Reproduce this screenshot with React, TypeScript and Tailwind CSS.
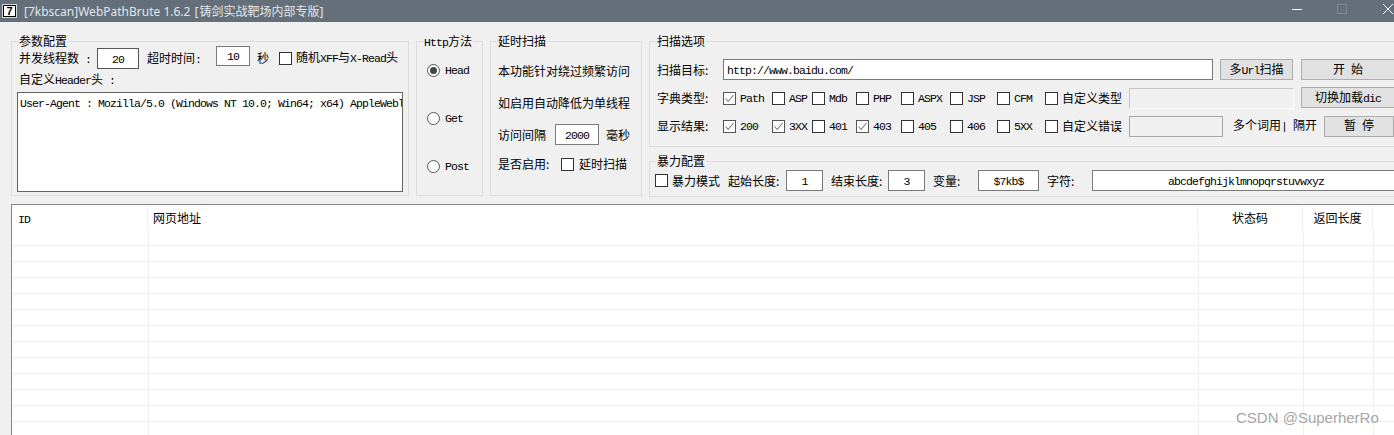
import React from "react";

const CJK = '"Noto Sans CJK SC", sans-serif';

function T({ children }: { children: string }) {
  const parts = children.split(/([\x20-\x7e]+)/).filter((p) => p.length > 0);
  return (
    <span className="whitespace-pre">
      {parts.map((p, i) =>
        /^[\x20-\x7e]+$/.test(p) ? (
          <span key={i} className="font-['Liberation_Mono',monospace] text-[11.5px] tracking-[-0.9px] whitespace-pre">
            {p}
          </span>
        ) : (
          <span key={i}>{p}</span>
        )
      )}
    </span>
  );
}

function Group({ title, className, children }: { title: string; className: string; children?: React.ReactNode }) {
  return (
    <div className={"relative border border-[#dcdcdc] shrink-0 " + className}>
      <div className="absolute left-[7px] -top-[9px] bg-[#f0f0f0] pr-[1px] leading-[16px] whitespace-nowrap">
        <T>{title}</T>
      </div>
      {children}
    </div>
  );
}

function Box({ value, className, left }: { value?: string; className: string; left?: boolean }) {
  return (
    <div
      className={
        "shrink-0 border border-[#7a7a7a] bg-white flex items-center whitespace-nowrap overflow-hidden " +
        (left ? "justify-start pl-[3px] " : "justify-center ") +
        className
      }
    >
      {value ? <T>{value}</T> : null}
    </div>
  );
}

function Check({ checked }: { checked?: boolean }) {
  return (
    <div className={"w-[13px] h-[13px] shrink-0 border bg-white " + (checked ? "border-[#555555]" : "border-[#333333]")}>
      {checked && (
        <svg viewBox="0 0 11 11" className="w-[11px] h-[11px]">
          <path d="M1.5 5.5 L4.2 8.5 L9.5 2" fill="none" stroke="#7a7a7a" strokeWidth="1.1" />
        </svg>
      )}
    </div>
  );
}

function CheckCell({ label, w, checked }: { label: string; w: string; checked?: boolean }) {
  return (
    <div className={"flex items-center gap-[4px] shrink-0 whitespace-nowrap " + w}>
      <Check checked={checked} />
      <T>{label}</T>
    </div>
  );
}

function Radio({ label, on }: { label: string; on?: boolean }) {
  return (
    <div className="flex items-center gap-[5px] h-[16px]">
      <div className="w-[13px] h-[13px] rounded-full border border-[#555555] bg-white flex items-center justify-center">
        {on && <div className="w-[7px] h-[7px] rounded-full bg-[#444444]" />}
      </div>
      <T>{label}</T>
    </div>
  );
}

function Btn({ label, className }: { label: string; className: string }) {
  return (
    <div className={"shrink-0 bg-[#e1e1e1] border border-[#adadad] flex items-center justify-center whitespace-pre " + className}>
      <T>{label}</T>
    </div>
  );
}

const rowsCount = Array.from({ length: 13 }, (_, i) => i);

export default function App() {
  return (
    <div
      className="relative w-[1394px] h-[435px] overflow-hidden bg-[#f0f0f0] text-[12px] text-black"
      style={{ fontFamily: CJK }}
    >
      {/* title bar */}
      <div className="h-[22px] bg-[#646f7a] flex items-center">
        <div className="ml-[2px] w-[15px] h-[14px] bg-white border border-[#d8d8d8] flex items-center justify-center">
          <div className="w-[13px] h-[12px] border border-black bg-white flex items-center justify-center">
            <span className="font-['Liberation_Sans',sans-serif] font-bold text-[11px] leading-none">7</span>
          </div>
        </div>
        <div className="ml-[7px] text-[#e0e6ec] whitespace-nowrap leading-[16px]">
          <span className="font-['Noto_Sans',sans-serif]">[7kbscan]WebPathBrute 1.6.2 </span>
          <span className="ml-[1px]">
            <span className="font-['Noto_Sans',sans-serif] mr-[1px]">[</span>铸剑实战靶场内部专版
            <span className="font-['Noto_Sans',sans-serif]">]</span>
          </span>
        </div>
        <div className="ml-auto mr-[1px] -mt-[4px] flex items-center">
          <div className="w-[10px] h-[1px] bg-white mr-[35px]" />
          <div className="w-[10px] h-[10px] border border-[#7f8a95] mr-[36px]" />
          <svg viewBox="0 0 10 10" className="w-[10px] h-[10px]">
            <path d="M0 0 L10 10 M10 0 L0 10" stroke="#ffffff" strokeWidth="1" />
          </svg>
        </div>
      </div>

      {/* body */}
      <div className="pt-[19px] pl-[11px]">
        <div className="flex gap-[7px] h-[155px] items-start">
          {/* 参数配置 */}
          <Group title="参数配置" className="w-[398px] h-[155px] pl-[7px] pt-[5px]">
            <div className="flex items-start h-[22px]">
              <div className="w-[78px] shrink-0 leading-[22px] whitespace-pre">
                <T>并发线程数 :</T>
              </div>
              <Box value="20" className="w-[42px] h-[21px] mt-[1px] border-[#555555]" />
              <div className="ml-[8px] w-[69px] shrink-0 leading-[22px] whitespace-pre">
                <T>超时时间:</T>
              </div>
              <Box value="10" className="w-[34px] h-[20px] -mt-[1px]" />
              <div className="ml-[7px] w-[22px] shrink-0 leading-[22px]">秒</div>
              <div className="flex items-center gap-[4px] h-[22px] whitespace-nowrap shrink-0">
                <Check />
                <T>随机XFF与X-Read头</T>
              </div>
            </div>
            <div className="-mt-[1px] h-[22px] leading-[22px] whitespace-pre">
              <T>自定义Header头 :</T>
            </div>
            <div className="pt-[2px]">
              <div className="-ml-[2px] w-[386px] h-[100px] bg-white border border-[#646464] pl-[2px] pt-[1px] overflow-hidden whitespace-nowrap leading-[16px]">
                <T>{"User-Agent : Mozilla/5.0 (Windows NT 10.0; Win64; x64) AppleWebl"}</T>
              </div>
            </div>
          </Group>

          {/* Http方法 */}
          <Group title="Http方法" className="w-[67px] h-[155px] pl-[10px] pt-[20px]">
            <div className="flex flex-col gap-[32px]">
              <Radio label="Head" on />
              <Radio label="Get" />
              <Radio label="Post" />
            </div>
          </Group>

          {/* 延时扫描 */}
          <Group title="延时扫描" className="w-[152px] h-[155px] pl-[7px] pt-[21px]">
            <div className="h-[16px] leading-[16px] whitespace-nowrap">本功能针对绕过频繁访问</div>
            <div className="h-[16px] leading-[16px] mt-[16px] whitespace-nowrap">如启用自动降低为单线程</div>
            <div className="flex items-center mt-[13px] h-[21px] whitespace-nowrap">
              <span className="w-[57px]">访问间隔</span>
              <Box value="2000" className="w-[44px] h-[21px]" />
              <span className="ml-[7px]">毫秒</span>
            </div>
            <div className="flex items-center mt-[11px] h-[16px] whitespace-nowrap">
              <span className="w-[63px]">是否启用:</span>
              <div className="flex items-center gap-[5px]">
                <Check />
                <span>延时扫描</span>
              </div>
            </div>
          </Group>

          {/* 右侧 */}
          <div className="flex flex-col gap-[14px] shrink-0">
            <Group title="扫描选项" className="w-[760px] h-[106px] pl-[7px] pt-[17px]">
              <div className="flex items-center h-[21px]">
                <div className="w-[66px] shrink-0 whitespace-nowrap">扫描目标:</div>
                <Box value="http://www.baidu.com/" left className="w-[490px] h-[21px]" />
                <Btn label="多Url扫描" className="ml-[7px] w-[73px] h-[21px]" />
                <Btn label="开 始" className="ml-[8px] w-[94px] h-[21px]" />
              </div>
              <div className="flex items-center h-[22px] mt-[7px]">
                <div className="w-[66px] shrink-0 whitespace-nowrap">字典类型:</div>
                <CheckCell label="Path" w="w-[49px]" checked />
                <CheckCell label="ASP" w="w-[40px]" />
                <CheckCell label="Mdb" w="w-[44px]" />
                <CheckCell label="PHP" w="w-[45px]" />
                <CheckCell label="ASPX" w="w-[49px]" />
                <CheckCell label="JSP" w="w-[47px]" />
                <CheckCell label="CFM" w="w-[48px]" />
                <CheckCell label="自定义类型" w="w-[84px]" />
                <div className="shrink-0 w-[165px] h-[21px] border border-[#c4c4c4] border-r-white border-b-white" />
                <Btn label="切换加载dic" className="ml-[7px] w-[94px] h-[21px] -mt-[1px]" />
              </div>
              <div className="flex items-center h-[22px] mt-[6px]">
                <div className="w-[66px] shrink-0 whitespace-nowrap">显示结果:</div>
                <CheckCell label="200" w="w-[49px]" checked />
                <CheckCell label="3XX" w="w-[40px]" checked />
                <CheckCell label="401" w="w-[44px]" />
                <CheckCell label="403" w="w-[45px]" checked />
                <CheckCell label="405" w="w-[49px]" />
                <CheckCell label="406" w="w-[47px]" />
                <CheckCell label="5XX" w="w-[48px]" />
                <CheckCell label="自定义错误" w="w-[84px]" />
                <div className="shrink-0 w-[94px] h-[21px] border border-[#a8a8a8]" />
                <div className="ml-[10px] w-[91px] shrink-0 whitespace-pre">
                  <T>多个词用| 隔开</T>
                </div>
                <Btn label="暂 停" className="w-[70px] h-[21px]" />
              </div>
            </Group>
            <Group title="暴力配置" className="w-[760px] h-[36px] pl-[5px] pt-[8px]">
              <div className="flex items-center h-[21px] whitespace-nowrap">
                <Check />
                <span className="ml-[4px] w-[56px] shrink-0">暴力模式</span>
                <span className="w-[58px] shrink-0">起始长度:</span>
                <Box value="1" className="w-[37px] h-[21px]" />
                <span className="ml-[8px] w-[57px] shrink-0">结束长度:</span>
                <Box value="3" className="w-[37px] h-[21px]" />
                <span className="ml-[8px] w-[45px] shrink-0">变量:</span>
                <Box value="$7kb$" className="w-[61px] h-[21px]" />
                <span className="ml-[8px] w-[45px] shrink-0">字符:</span>
                <Box value="abcdefghijklmnopqrstuvwxyz" className="w-[308px] h-[21px]" />
              </div>
            </Group>
          </div>
        </div>

        {/* list */}
        <div className="mt-[8px] border-t border-l border-[#82878c] bg-white h-[240px] overflow-hidden">
          <div className="flex h-[25px] pt-[1px]">
            <div className="w-[136px] h-[24px] border-r border-[#f0f0f0] pl-[6px] leading-[24px]">
              <T>ID</T>
            </div>
            <div className="w-[1050px] h-[24px] border-r border-[#f0f0f0] pl-[5px] leading-[24px]">网页地址</div>
            <div className="w-[105px] h-[24px] border-r border-[#f0f0f0] text-center leading-[24px]">状态码</div>
            <div className="w-[70px] h-[24px] border-r border-[#f0f0f0] text-center leading-[24px]">返回长度</div>
          </div>
          {rowsCount.map((i) => (
            <div key={i} className="flex border-b border-[#f0f0f0] h-[16px]">
              <div className="w-[137px] border-r border-[#f0f0f0]" />
              <div className="w-[1050px] border-r border-[#f0f0f0]" />
              <div className="w-[105px] border-r border-[#f0f0f0]" />
              <div className="w-[70px] border-r border-[#f0f0f0]" />
            </div>
          ))}
        </div>
      </div>

      {/* watermark */}
      <div className="absolute left-[1236px] top-[409px] text-[15px] leading-[18px] text-[#a6a6a6] font-['Liberation_Sans',sans-serif] whitespace-nowrap">
        CSDN @SuperherRo
      </div>
    </div>
  );
}
